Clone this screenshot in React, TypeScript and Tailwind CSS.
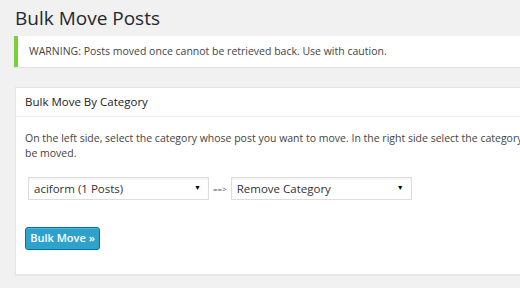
import { ReactNode } from "react";

/* ================= SELECT BOX ================= */

function FakeSelect({ children }: { children: ReactNode }) {
  return (
    <div className="flex h-[23px] w-[181px] items-center justify-between border border-[#dddddd] bg-white pl-[5px] pr-[7px] text-[11.5px] text-[#333333] shadow-[inset_0_1px_2px_rgba(0,0,0,0.07)]">
      <span>{children}</span>
      <span className="text-[7px] text-black">▼</span>
    </div>
  );
}

/* ================= PAGE ================= */

export default function App() {
  return (
    <div
      className="h-[288px] w-[520px] overflow-hidden bg-[#f1f1f1] text-[#444444]"
      style={{ fontFamily: '"Open Sans", "Noto Sans", sans-serif' }}
    >
      <div className="w-[760px]">
        <h1 className="pl-[15px] pt-[5px] text-[19px] leading-[26px] text-[#23282d]">
          Bulk Move Posts
        </h1>

        <div className="ml-[14px] mt-[5px] flex h-[31px] items-center border-l-4 border-[#7ad03a] bg-white pl-[11px] text-[10.5px] shadow-[0_1px_1px_rgba(0,0,0,0.06)]">
          WARNING: Posts moved once cannot be retrieved back. Use with caution.
        </div>

        <div className="ml-[15px] mt-[20px] h-[188px] border border-[#e5e5e5] bg-white shadow-[0_1px_1px_rgba(0,0,0,0.04)]">
          <div className="flex h-[29px] items-center border-b border-[#eeeeee] pl-[9px] text-[11.5px] text-[#222222]">
            Bulk Move By Category
          </div>

          <div className="px-[9px] pt-[14px]">
            <p className="text-[10.5px] leading-[15px]">
              On the left side, select the category whose post you want to move. In the right side select the category to which the posts should
              <br />
              be moved.
            </p>

            <div className="mt-[16px] flex items-center pl-[3px]">
              <FakeSelect>aciform (1 Posts)</FakeSelect>
              <span className="mx-[4px] text-[8px] text-[#555555]">==&gt;</span>
              <FakeSelect>Remove Category</FakeSelect>
            </div>

            <button className="mt-[27px] flex h-[23px] w-[75px] items-center justify-center rounded-[3px] border border-[#0074a2] bg-[#2ea2cc] text-[11px] font-semibold text-white shadow-[inset_0_1px_0_rgba(120,200,230,0.5)]">
              Bulk Move »
            </button>
          </div>
        </div>
      </div>
    </div>
  );
}
